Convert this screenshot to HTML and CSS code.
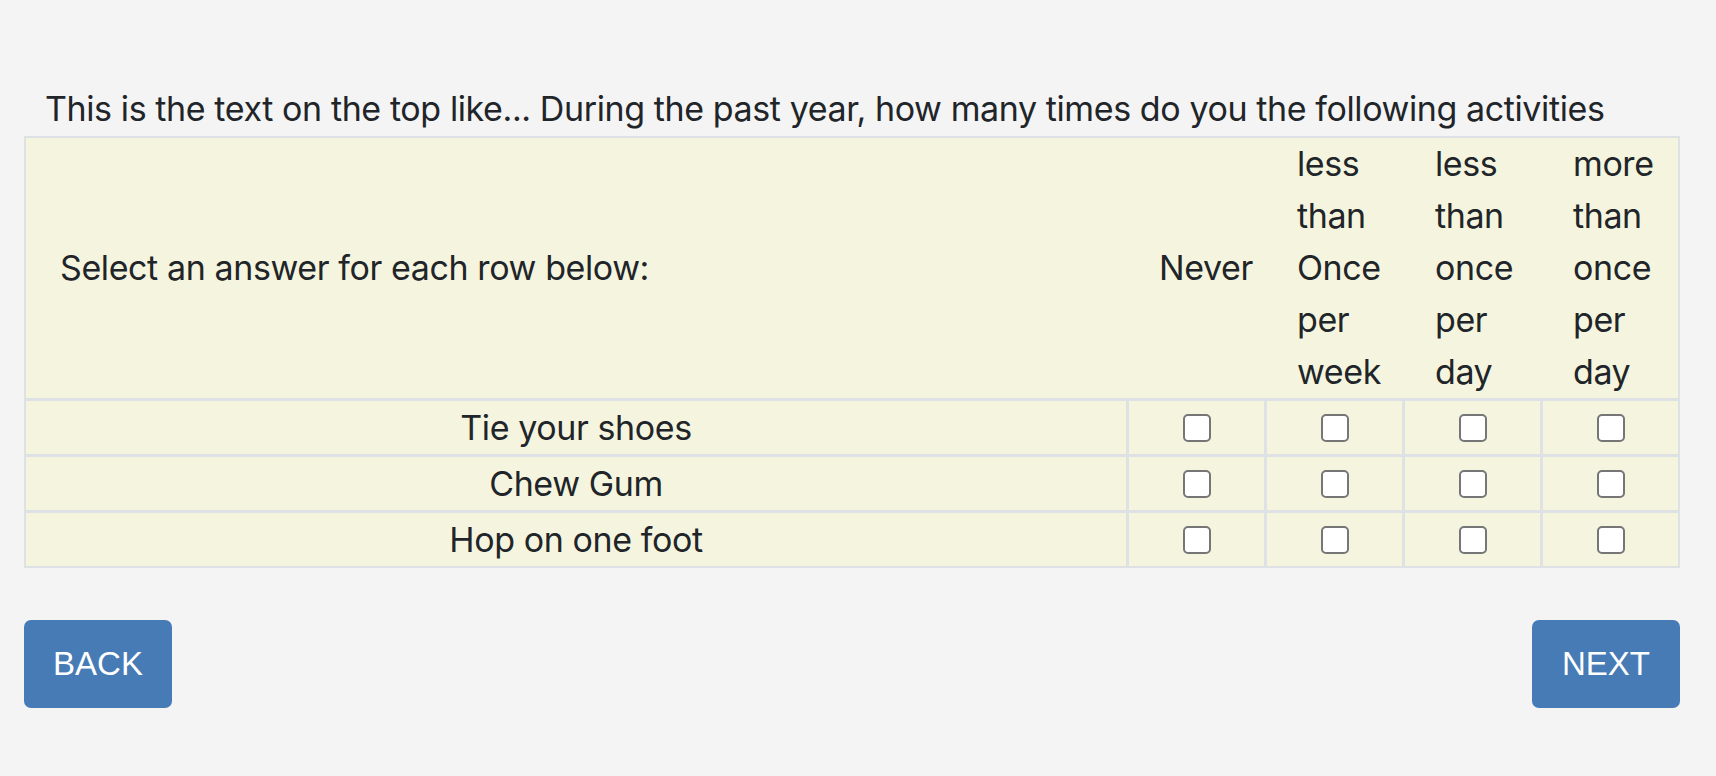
FILE: index.html
```html
<!DOCTYPE html>
<html lang="en">
<head>
<meta charset="utf-8">
<title>Survey</title>
<link rel="stylesheet" href="styles.css">
</head>
<body>
<main class="page">
  <p class="prompt">This is the text on the top like... During the past year, how many times do you the following activities</p>
  <table class="matrix">
    <colgroup>
      <col class="c-label">
      <col class="c-opt">
      <col class="c-opt">
      <col class="c-opt">
      <col class="c-opt">
    </colgroup>
    <thead>
      <tr>
        <th class="h-label">Select an answer for each row below:</th>
        <th class="h-opt">Never</th>
        <th class="h-opt">less than Once per week</th>
        <th class="h-opt">less than once per day</th>
        <th class="h-opt">more than once per day</th>
      </tr>
    </thead>
    <tbody>
      <tr>
        <td class="d-label">Tie your shoes</td>
        <td class="d-opt"><input type="checkbox" class="box"></td>
        <td class="d-opt"><input type="checkbox" class="box"></td>
        <td class="d-opt"><input type="checkbox" class="box"></td>
        <td class="d-opt"><input type="checkbox" class="box"></td>
      </tr>
      <tr>
        <td class="d-label">Chew Gum</td>
        <td class="d-opt"><input type="checkbox" class="box"></td>
        <td class="d-opt"><input type="checkbox" class="box"></td>
        <td class="d-opt"><input type="checkbox" class="box"></td>
        <td class="d-opt"><input type="checkbox" class="box"></td>
      </tr>
      <tr>
        <td class="d-label">Hop on one foot</td>
        <td class="d-opt"><input type="checkbox" class="box"></td>
        <td class="d-opt"><input type="checkbox" class="box"></td>
        <td class="d-opt"><input type="checkbox" class="box"></td>
        <td class="d-opt"><input type="checkbox" class="box"></td>
      </tr>
    </tbody>
  </table>
  <div class="nav">
    <button class="btn" type="button">BACK</button>
    <button class="btn" type="button">NEXT</button>
  </div>
</main>
</body>
</html>
```

FILE: styles.css
```css
* {
  box-sizing: border-box;
}

html, body {
  margin: 0;
  background: #f4f4f4;
}

body {
  font-family: Inter, "Noto Sans", sans-serif;
  font-size: 34px;
  line-height: 52px;
  letter-spacing: -0.4px;
  color: #212529;
}

.page {
  padding: 83px 36px 0 24px;
}

.prompt {
  margin: 0 0 1px;
  padding-left: 21px;
  white-space: nowrap;
}

.matrix {
  width: 100%;
  table-layout: fixed;
  border-collapse: separate;
  border-spacing: 0;
  border: 2px solid #dfe2e5;
  background: #f5f5df;
}

.c-opt {
  width: 138px;
}

.matrix th {
  font-weight: normal;
  text-align: left;
  vertical-align: middle;
  padding: 0;
}

.h-label {
  padding-left: 34px !important;
}

.h-opt {
  padding-left: 30px !important;
  border-left: 3px solid transparent;
}

.matrix td {
  padding: 0;
  border-top: 3px solid #dfe2e5;
  vertical-align: middle;
  text-align: center;
  line-height: 53px;
}

.d-opt {
  border-left: 3px solid #dfe2e5;
}

.box {
  appearance: none;
  -webkit-appearance: none;
  display: block;
  margin: 0 auto;
  width: 28px;
  height: 28px;
  border: 2px solid #767676;
  border-radius: 5px;
  background: #ffffff;
}

.nav {
  display: flex;
  justify-content: space-between;
  margin-top: 52px;
}

.btn {
  height: 88px;
  width: 148px;
  padding: 0;
  border: none;
  border-radius: 7px;
  background: #467bb6;
  color: #ffffff;
  font-family: "Liberation Sans", Arial, sans-serif;
  font-size: 33px;
  letter-spacing: 0;
}
```
